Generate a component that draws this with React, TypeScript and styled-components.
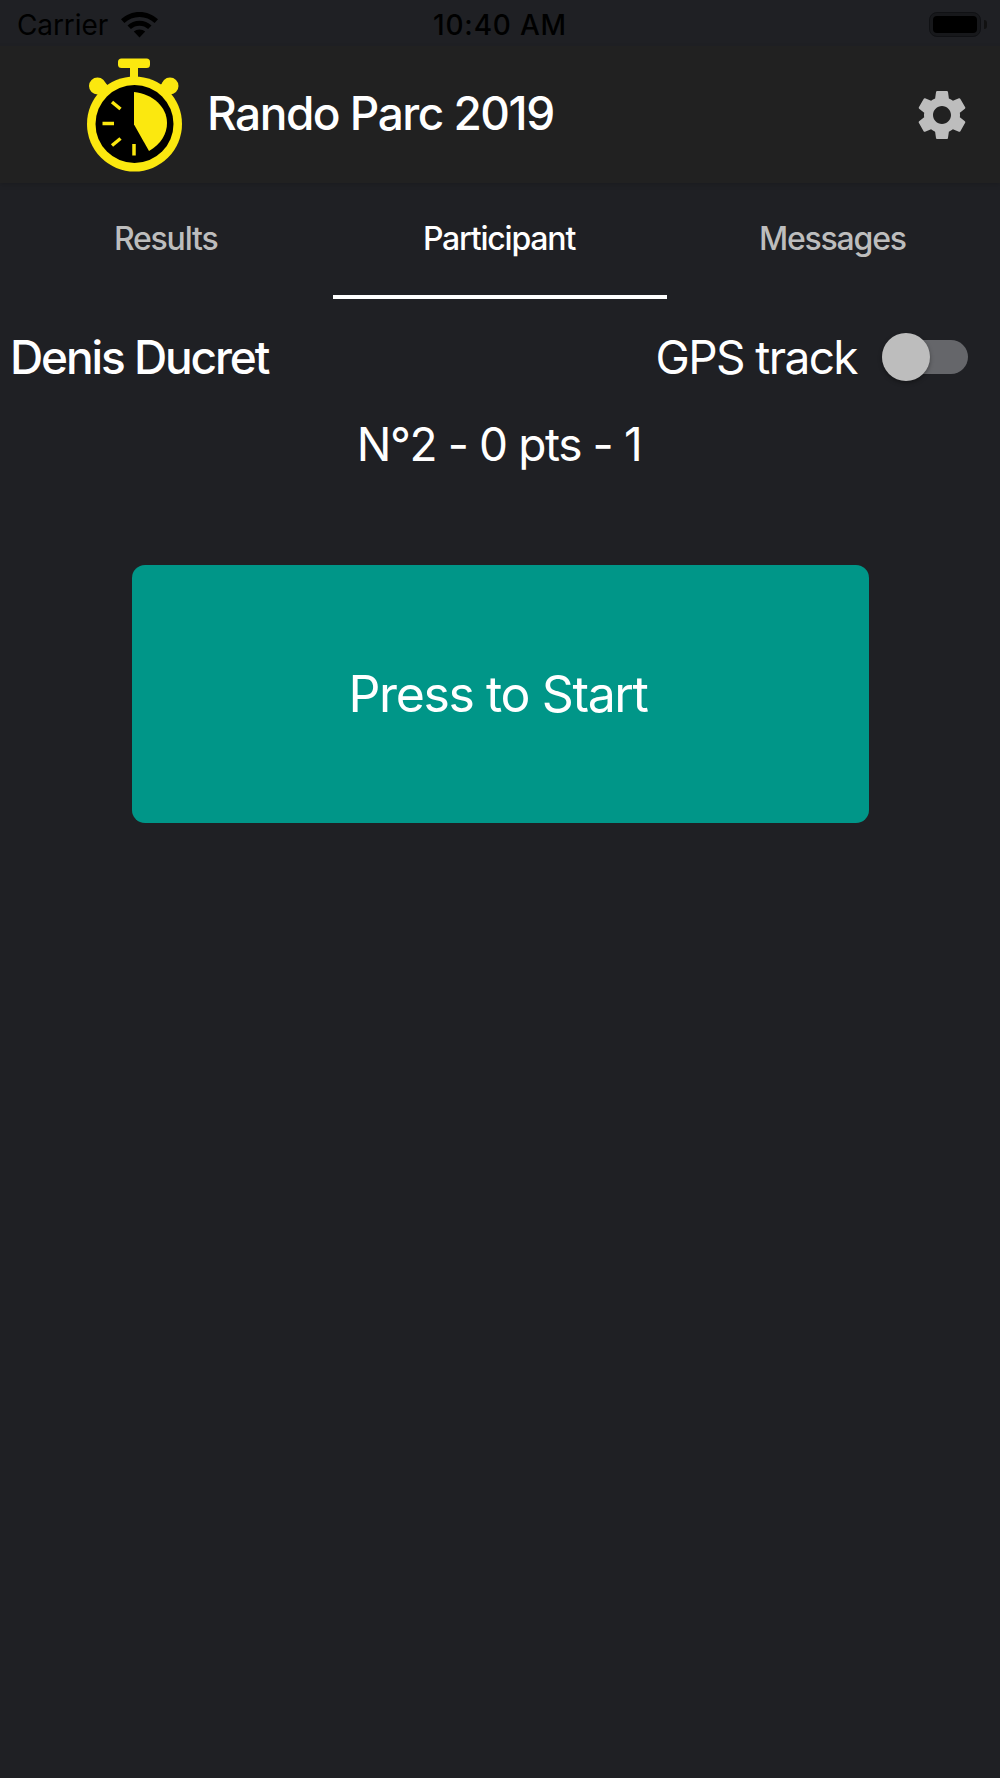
import styled, { createGlobalStyle } from 'styled-components';
import { MdSettings } from 'react-icons/md';

const GlobalStyle = createGlobalStyle`
  html, body {
    margin: 0;
    padding: 0;
    background: #1f2024;
  }
  * {
    box-sizing: border-box;
  }
`;

const Page = styled.div`
  width: 1000px;
  height: 1778px;
  overflow: hidden;
  background: #1f2024;
  color: #fff;
  font-family: Inter, "Liberation Sans", sans-serif;
`;

const StatusBar = styled.div`
  position: relative;
  height: 46px;
  display: flex;
  align-items: center;
  justify-content: space-between;
  padding: 3px 19px 0 17px;
  color: #000;
  font-size: 28px;
`;

const Carrier = styled.div`
  display: flex;
  align-items: center;
  gap: 13px;
  letter-spacing: -0.1px;
`;

const Clock = styled.div`
  position: absolute;
  left: 0;
  right: 0;
  text-align: center;
  font-weight: 500;
  letter-spacing: 0.8px;
`;

const Battery = styled.div`
  position: relative;
  width: 52px;
  height: 25px;
  padding: 3px;
  border: 1px solid #101114;
  border-radius: 8px;
  background: #17181b;

  &::before {
    content: '';
    display: block;
    height: 100%;
    background: #000;
    border-radius: 4px;
  }

  &::after {
    content: '';
    position: absolute;
    right: -7px;
    top: 7px;
    width: 3px;
    height: 9px;
    background: #111;
    border-radius: 0 3px 3px 0;
  }
`;

const Header = styled.header`
  position: relative;
  height: 137px;
  display: flex;
  align-items: center;
  justify-content: space-between;
  padding: 0 28px 0 86px;
  background: #212121;
  box-shadow: 0 2px 5px rgba(0, 0, 0, 0.15);
`;

const Brand = styled.div`
  display: flex;
  align-items: center;
  gap: 23px;
`;

const Title = styled.h1`
  margin: 0 0 4px;
  font-size: 46px;
  font-weight: 500;
  letter-spacing: -1.5px;
  white-space: nowrap;
`;

const SettingsIcon = styled(MdSettings)`
  display: block;
  color: #bdbdbd;
`;

const Tabs = styled.nav`
  display: grid;
  grid-template-columns: repeat(3, 1fr);
  height: 117px;
`;

const Tab = styled.div<{ $active?: boolean }>`
  display: flex;
  align-items: center;
  justify-content: center;
  height: 116px;
  padding: 0 2px 2px 0;
  border-bottom: 4px solid ${(p) => (p.$active ? '#fff' : 'transparent')};
  color: ${(p) => (p.$active ? '#fff' : '#bdbdbd')};
  font-size: 32px;
  font-weight: 500;
  letter-spacing: -1.2px;
`;

const ParticipantRow = styled.div`
  display: flex;
  align-items: center;
  justify-content: space-between;
  height: 58px;
  margin-top: 28px;
  padding: 0 32px 0 10px;
`;

const Name = styled.div`
  font-size: 46px;
  font-weight: 500;
  letter-spacing: -2.1px;
`;

const GpsToggle = styled.div`
  display: flex;
  align-items: center;
  gap: 25px;
  font-size: 46px;
  letter-spacing: -1.6px;
`;

const Track = styled.div`
  position: relative;
  width: 86px;
  height: 34px;
  border-radius: 17px;
  background: #65666a;
`;

const Knob = styled.div`
  position: absolute;
  left: 0;
  top: -7px;
  width: 48px;
  height: 48px;
  border-radius: 50%;
  background: #bdbdbd;
  box-shadow: 0 2px 4px rgba(0, 0, 0, 0.35);
`;

const Score = styled.div`
  margin-top: 29px;
  padding-right: 2px;
  text-align: center;
  font-size: 46px;
  line-height: 58px;
  letter-spacing: -1.4px;
`;

const StartButton = styled.button`
  display: block;
  width: 737px;
  height: 258px;
  margin: 92px auto 0;
  padding: 0 4px 0 0;
  border: 0;
  border-radius: 13px;
  background: #009688;
  color: #fff;
  font-family: inherit;
  font-size: 50px;
  letter-spacing: -1.4px;
`;

const WifiIcon = () => (
  <svg width="37" height="26" viewBox="0 0 37 26" fill="#000">
    <path d="M18.5 0C11.5 0 5 2.7 0 7.3l3.4 3.6C7.5 7.2 12.8 5 18.5 5s11 2.2 15.100 5.900L37 7.300C32 2.700 25.500 0 18.500 0z" />
    <path d="M18.500 8.700c-4.600 0-8.800 1.700-12 4.700l3.400 3.600c2.300-2.100 5.300-3.300 8.600-3.300s6.300 1.200 8.600 3.300l3.400-3.600c-3.200-3-7.400-4.700-12-4.700z" />
    <path d="M18.500 17.400c-2.200 0-4.200.8-5.700 2.200l5.700 6 5.700-6c-1.500-1.400-3.500-2.200-5.700-2.200z" />
  </svg>
);

const StopwatchLogo = () => (
  <svg width="98" height="114" viewBox="86 59 98 114">
    <g fill="#fbe80f">
      <rect x="118" y="59.500" width="32" height="9.500" rx="3.500" />
      <rect x="130" y="66" width="8" height="14" />
      <circle cx="97.500" cy="87" r="8.500" />
      <circle cx="170" cy="87" r="8.500" />
      <rect x="96" y="83" width="12" height="12" transform="rotate(45 102 89)" />
      <rect x="160" y="83" width="12" height="12" transform="rotate(45 166 89)" />
      <circle cx="134.500" cy="125" r="47.500" />
    </g>
    <circle cx="134.500" cy="125" r="39" fill="#000" />
    <path d="M134 93C153 95 167 108 167 124c0 11-6 21-18 28L134 125.500z" fill="#fbe80f" />
    <g stroke="#fbe80f" strokeWidth="3.500" fill="none">
      <path d="M112 103l8.500 7" />
      <path d="M102.500 124.500h11.500" />
      <path d="M112 146.500l8.500-7" />
      <path d="M134 145v11.500" />
    </g>
  </svg>
);

export default function App() {
  return (
    <Page>
      <GlobalStyle />
      <StatusBar>
        <Carrier>
          Carrier
          <WifiIcon />
        </Carrier>
        <Clock>10:40 AM</Clock>
        <Battery />
      </StatusBar>
      <Header>
        <Brand>
          <StopwatchLogo />
          <Title>Rando Parc 2019</Title>
        </Brand>
        <SettingsIcon size={60} />
      </Header>
      <Tabs>
        <Tab>Results</Tab>
        <Tab $active>Participant</Tab>
        <Tab>Messages</Tab>
      </Tabs>
      <ParticipantRow>
        <Name>Denis Ducret</Name>
        <GpsToggle>
          GPS track
          <Track>
            <Knob />
          </Track>
        </GpsToggle>
      </ParticipantRow>
      <Score>N°2 - 0 pts - 1</Score>
      <StartButton>Press to Start</StartButton>
    </Page>
  );
}
